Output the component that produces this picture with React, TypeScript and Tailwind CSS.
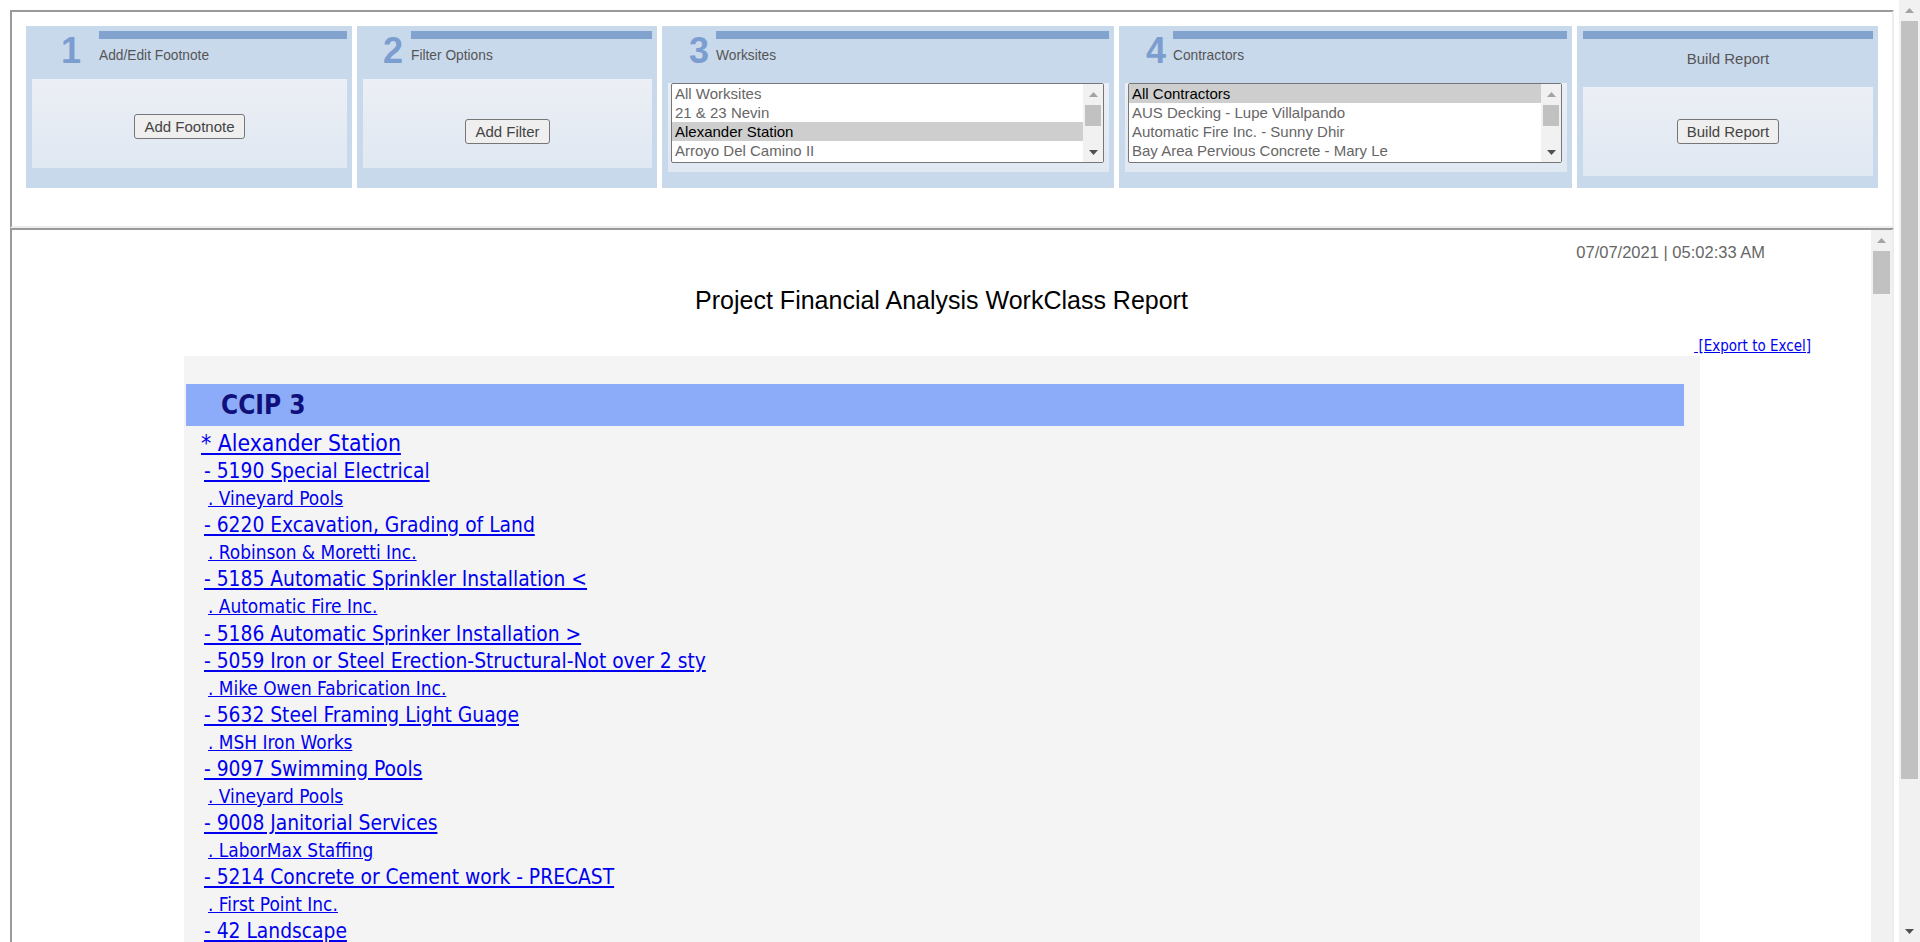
import React from "react";

const arial = "font-['Liberation_Sans',Arial,sans-serif]";
const tahoma = "font-['DejaVu_Sans_Condensed','DejaVu_Sans',sans-serif]";

type Row = { text: string; kind: "site" | "wc" | "co"; tall?: boolean };

const rows: Row[] = [
  { text: "* Alexander Station", kind: "site" },
  { text: "- 5190 Special Electrical", kind: "wc", tall: true },
  { text: ". Vineyard Pools", kind: "co" },
  { text: "- 6220 Excavation, Grading of Land", kind: "wc" },
  { text: ". Robinson & Moretti Inc.", kind: "co" },
  { text: "- 5185 Automatic Sprinkler Installation <", kind: "wc" },
  { text: ". Automatic Fire Inc.", kind: "co" },
  { text: "- 5186 Automatic Sprinker Installation >", kind: "wc", tall: true },
  { text: "- 5059 Iron or Steel Erection-Structural-Not over 2 sty", kind: "wc" },
  { text: ". Mike Owen Fabrication Inc.", kind: "co" },
  { text: "- 5632 Steel Framing Light Guage", kind: "wc" },
  { text: ". MSH Iron Works", kind: "co" },
  { text: "- 9097 Swimming Pools", kind: "wc" },
  { text: ". Vineyard Pools", kind: "co" },
  { text: "- 9008 Janitorial Services", kind: "wc" },
  { text: ". LaborMax Staffing", kind: "co" },
  { text: "- 5214 Concrete or Cement work - PRECAST", kind: "wc" },
  { text: ". First Point Inc.", kind: "co" },
  { text: "- 42 Landscape", kind: "wc" },
];

const worksites = ["All Worksites", "21 & 23 Nevin", "Alexander Station", "Arroyo Del Camino II"];
const contractors = [
  "All Contractors",
  "AUS Decking - Lupe Villalpando",
  "Automatic Fire Inc. - Sunny Dhir",
  "Bay Area Pervious Concrete - Mary Le",
];

const Arrow = ({ up, color }: { up?: boolean; color: string }) => (
  <svg width="9" height="5" viewBox="0 0 9 5">
    <path d={up ? "M0 5L4.5 0L9 5Z" : "M0 0L4.5 5L9 0Z"} fill={color} />
  </svg>
);

const Btn = ({ children }: { children: React.ReactNode }) => (
  <button className="rounded-[3px] border border-[#767676] bg-[#efefef] px-[9px] py-[3px] text-[15px] leading-[17px] text-[#444]">
    {children}
  </button>
);

// little listbox with a fake native scrollbar
const ListBox = ({ items, selected }: { items: string[]; selected: number }) => (
  <div className="ml-[3px] mr-[5px] mt-[4px] flex h-[80px] rounded-[2px] border border-[#767676] bg-white">
    <div className="flex-1 overflow-hidden">
      {items.map((it, i) => (
        <div
          key={it}
          className={`h-[19px] whitespace-nowrap pl-[3px] text-[15px] leading-[19px] ${
            i === selected ? "bg-[#cecece] text-black" : "text-[#666]"
          }`}
        >
          {it}
        </div>
      ))}
    </div>
    <div className="flex w-[20px] flex-col bg-[#f1f1f1]">
      <div className="flex h-[20px] items-center justify-center">
        <Arrow up color="#a3a3a3" />
      </div>
      <div className="flex-1">
        <div className="mx-[2px] mt-[1px] h-[21px] bg-[#c1c1c1]" />
      </div>
      <div className="flex h-[20px] items-center justify-center">
        <Arrow color="#505050" />
      </div>
    </div>
  </div>
);

type PanelProps = {
  num: string;
  title: string;
  width: string;
  numBox: string;
  children: React.ReactNode;
};

const Panel = ({ num, title, width, numBox, children }: PanelProps) => (
  <div className={`h-[162px] bg-[#c9d9ec] ${width}`}>
    <div className="flex h-[53px]">
      <div className={`pt-[7px] text-[36px] font-bold leading-[36px] text-[#7c9dcf] ${numBox}`}>{num}</div>
      <div className="flex-1 pr-[5px] pt-[5px]">
        <div className="h-[8px] bg-[#83a3cf]" />
        <div className="mt-[9px] text-[13.75px] leading-[16px] text-[#555]">{title}</div>
      </div>
    </div>
    <div className="ml-[6px] mr-[5px] h-[89px] bg-linear-to-b from-[#eceff5] to-[#e0e8f2]">{children}</div>
  </div>
);

const App = () => {
  return (
    <div className={`flex h-[942px] w-[1920px] overflow-hidden bg-white ${arial}`}>
      <div className="flex-1 pl-[10px] pt-[10px]">
        {/* top frame: report options */}
        <div className="h-[218px] w-[1884px] border-2 border-b-[#ededed] border-l-[#9a9a9a] border-r-[#ededed] border-t-[#9a9a9a] bg-white pl-[14px] pt-[14px]">
          <div className="flex gap-[5px]">
            <Panel num="1" title="Add/Edit Footnote" width="w-[326px]" numBox="w-[73px] pl-[35px]">
              <div className="flex justify-center pt-[35px]">
                <Btn>Add Footnote</Btn>
              </div>
            </Panel>
            <Panel num="2" title="Filter Options" width="w-[300px]" numBox="w-[54px] pl-[26px]">
              <div className="flex justify-center pt-[40px]">
                <Btn>Add Filter</Btn>
              </div>
            </Panel>
            <Panel num="3" title="Worksites" width="w-[452px]" numBox="w-[54px] pl-[27px]">
              <ListBox items={worksites} selected={2} />
            </Panel>
            <Panel num="4" title="Contractors" width="w-[453px]" numBox="w-[54px] pl-[27px]">
              <ListBox items={contractors} selected={0} />
            </Panel>
            <div className="h-[162px] w-[301px] bg-[#c9d9ec]">
              <div className="ml-[6px] mr-[5px] pt-[5px]">
                <div className="h-[8px] bg-[#83a3cf]" />
                <div className="mt-[11px] text-center text-[15px] leading-[18px] text-[#555]">Build Report</div>
              </div>
              <div className="ml-[6px] mr-[5px] mt-[19px] flex h-[89px] justify-center bg-linear-to-b from-[#eceff5] to-[#e0e8f2] pt-[32px]">
                <div>
                  <Btn>Build Report</Btn>
                </div>
              </div>
            </div>
          </div>
        </div>

        {/* bottom frame: report */}
        <div className="flex h-[760px] w-[1884px] border-2 border-b-[#ededed] border-l-[#9a9a9a] border-r-[#ededed] border-t-[#9a9a9a] bg-white">
          <div className="flex-1 overflow-hidden">
            <div className="pr-[106px] pt-[12px] text-right text-[16.5px] leading-[20px] text-[#666]">
              07/07/2021 | 05:02:33 AM
            </div>
            <div className="mt-[23px] text-center text-[25px] leading-[30px] text-black">
              Project Financial Analysis WorkClass Report
            </div>
            <div className={`mt-[22px] pr-[60px] text-right text-[15px] leading-[18px] ${tahoma}`}>
              <a className="cursor-pointer text-[#0000ee] underline">{"\u00a0[Export to Excel]"}</a>
            </div>
            <div className={`ml-[172px] mt-[1px] w-[1516px] bg-[#f4f4f4] pt-[28px] ${tahoma}`}>
              <div className="ml-[2px] flex h-[42px] w-[1498px] items-center bg-[#8cabf8] pl-[35px] text-[26px] font-bold text-[#10107a]">
                CCIP 3
              </div>
              <div className="pt-[3px]">
                {rows.map((r, i) => (
                  <div
                    key={i}
                    className={`whitespace-nowrap ${
                      r.kind === "site"
                        ? "h-[28px] pl-[17px] text-[22.8px] leading-[28px]"
                        : r.kind === "wc"
                        ? r.tall
                          ? "h-[28px] pl-[20px] text-[20.8px] leading-[28px]"
                          : "h-[27px] pl-[20px] text-[20.8px] leading-[27px]"
                        : "h-[27px] pl-[24px] text-[18.9px] leading-[27px]"
                    }`}
                  >
                    <a className="cursor-pointer text-[#0000ee] underline">{r.text}</a>
                  </div>
                ))}
              </div>
            </div>
          </div>
          <div className="flex w-[21px] flex-col bg-[#f1f1f1]">
            <div className="flex h-[21px] items-center justify-center">
              <Arrow up color="#a3a3a3" />
            </div>
            <div className="flex-1">
              <div className="mx-[2px] h-[43px] bg-[#c1c1c1]" />
            </div>
            <div className="flex h-[21px] items-center justify-center">
              <Arrow color="#505050" />
            </div>
          </div>
        </div>
      </div>

      {/* page scrollbar */}
      <div className="flex h-[942px] w-[21px] flex-col bg-[#f1f1f1]">
        <div className="flex h-[21px] items-center justify-center">
          <Arrow up color="#a3a3a3" />
        </div>
        <div className="flex-1">
          <div className="mx-[2px] h-[758px] bg-[#c1c1c1]" />
        </div>
        <div className="flex h-[21px] items-center justify-center">
          <Arrow color="#505050" />
        </div>
      </div>
    </div>
  );
};

export default App;
